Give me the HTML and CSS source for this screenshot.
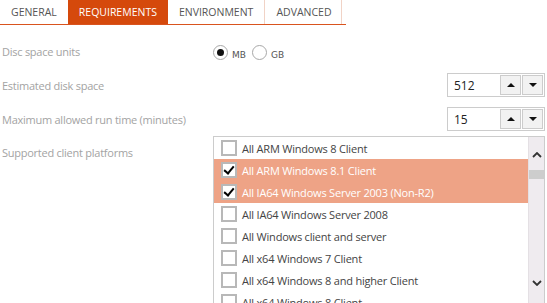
FILE: index.html
```html
<!DOCTYPE html>
<html lang="en">
<head>
  <meta charset="UTF-8" />
  <title>Requirements</title>
  <link rel="stylesheet" href="styles.css">
</head>
<body>
  <div class="tabs">
    <div class="tab">General</div>
    <div class="tab active">Requirements</div>
    <div class="tab">Environment</div>
    <div class="tab">Advanced</div>
  </div>

  <div class="form">
    <div class="row">
      <label class="label">Disc space units</label>
      <div class="radios">
        <span class="radio checked"></span><span class="radio-text">MB</span>
        <span class="radio"></span><span class="radio-text">GB</span>
      </div>
    </div>

    <div class="row">
      <label class="label">Estimated disk space</label>
      <div class="spinner">
        <span class="value">512</span>
        <button class="spin up"></button>
        <button class="spin down"></button>
      </div>
    </div>

    <div class="row">
      <label class="label">Maximum allowed run time (minutes)</label>
      <div class="spinner">
        <span class="value">15</span>
        <button class="spin up"></button>
        <button class="spin down"></button>
      </div>
    </div>

    <div class="row list-row">
      <label class="label">Supported client platforms</label>
      <div class="listbox">
        <ul class="items">
          <li><span class="check"></span>All ARM Windows 8 Client</li>
          <li class="selected"><span class="check on"></span>All ARM Windows 8.1 Client</li>
          <li class="selected"><span class="check on"></span>All IA64 Windows Server 2003 (Non-R2)</li>
          <li><span class="check"></span>All IA64 Windows Server 2008</li>
          <li><span class="check"></span>All Windows client and server</li>
          <li><span class="check"></span>All x64 Windows 7 Client</li>
          <li><span class="check"></span>All x64 Windows 8 and higher Client</li>
          <li><span class="check"></span>All x64 Windows 8 Client</li>
        </ul>
        <div class="scrollbar">
          <svg class="arrow" width="10" height="6" viewBox="0 0 10 6"><path d="M1 5 L5 1 L9 5" fill="none" stroke="#333" stroke-width="1.8"/></svg>
          <div class="thumb"></div>
          <svg class="arrow bottom" width="10" height="6" viewBox="0 0 10 6"><path d="M1 1 L5 5 L9 1" fill="none" stroke="#333" stroke-width="1.8"/></svg>
        </div>
      </div>
    </div>
  </div>
</body>
</html>
```

FILE: styles.css
```css
* {
  box-sizing: border-box;
}

body {
  margin: 0;
  height: 303px;
  overflow: hidden;
  font-family: 'Open Sans', 'Noto Sans', sans-serif;
  font-size: 11px;
  color: #444;
  background: #fff;
}

.tabs {
  display: flex;
  width: 346px;
  height: 25px;
  border-bottom: 1px solid #d9531e;
}

.tab {
  padding: 0 11px;
  line-height: 24px;
  text-transform: uppercase;
  font-size: 10.5px;
  color: #555;
  border-right: 1px solid #f1d3c6;
}

.tab:first-child {
  border-right: none;
}

.tab:last-child {
  padding-right: 9px;
}

.tab.active {
  background: #d5490c;
  color: #fff;
  border-right: none;
}

.form {
  padding: 0 2px 0 2px;
}

.row {
  display: flex;
  align-items: center;
  height: 34px;
}

.row:first-child {
  margin-top: 9px;
}

.label {
  width: 211px;
  flex-shrink: 0;
  color: #a3a3a3;
  font-size: 11px;
  letter-spacing: -0.25px;
}

.radios {
  display: flex;
  align-items: center;
  padding-top: 2px;
}

.radio {
  width: 15px;
  height: 15px;
  border: 1px solid #a8a8a8;
  border-radius: 50%;
  position: relative;
}

.radio.checked::after {
  content: '';
  position: absolute;
  left: 3px;
  top: 3px;
  width: 7px;
  height: 7px;
  border-radius: 50%;
  background: #111;
}

.radio-text {
  font-family: 'DejaVu Sans', sans-serif;
  font-size: 9px;
  color: #555;
  margin: 5px 6px 0 4px;
}

.spinner {
  margin-left: auto;
  width: 98px;
  height: 24px;
  border: 1px solid #ccc;
  display: flex;
  align-items: center;
  padding: 0 1px 0 6px;
  gap: 1px;
}

.spinner .value {
  flex: 1;
  font-size: 12px;
  color: #222;
}

.spin {
  width: 21px;
  height: 20px;
  border: 1px solid #ccc;
  background: #f2f2f2;
  padding: 0;
  position: relative;
}

.spin::after {
  content: '';
  position: absolute;
  left: 6px;
  border-left: 4px solid transparent;
  border-right: 4px solid transparent;
}

.spin.up::after {
  top: 7px;
  border-bottom: 4px solid #111;
}

.spin.down::after {
  top: 7px;
  border-top: 4px solid #111;
}

.list-row {
  align-items: flex-start;
  height: auto;
}

.list-row .label {
  padding-top: 9px;
}

.listbox {
  flex: 1;
  height: 180px;
  border: 1px solid #ccc;
  display: flex;
}

.items {
  list-style: none;
  margin: 0;
  padding: 0;
  flex: 1;
}

.items li {
  display: flex;
  align-items: center;
  height: 22px;
  padding-left: 7px;
  font-size: 11px;
  letter-spacing: -0.2px;
  color: #444;
}

.items li.selected {
  background: #eea386;
  color: #fff;
}

.check {
  width: 16px;
  height: 16px;
  border: 2px solid #b8b8b8;
  background: #fff;
  margin-right: 5px;
  position: relative;
}

.check.on::after {
  content: '';
  position: absolute;
  left: 3px;
  top: 0px;
  width: 4px;
  height: 8px;
  border: solid #000;
  border-width: 0 2px 2px 0;
  transform: rotate(40deg);
}

.scrollbar {
  width: 16px;
  background: #efebef;
  border-left: 1px solid #e4e0e4;
  position: relative;
}

.arrow {
  position: absolute;
  left: 3px;
  top: 15px;
}

.arrow.bottom {
  top: 143px;
}

.thumb {
  position: absolute;
  left: 0;
  right: 0;
  top: 33px;
  height: 9px;
  background: #cdcdcd;
}
```
